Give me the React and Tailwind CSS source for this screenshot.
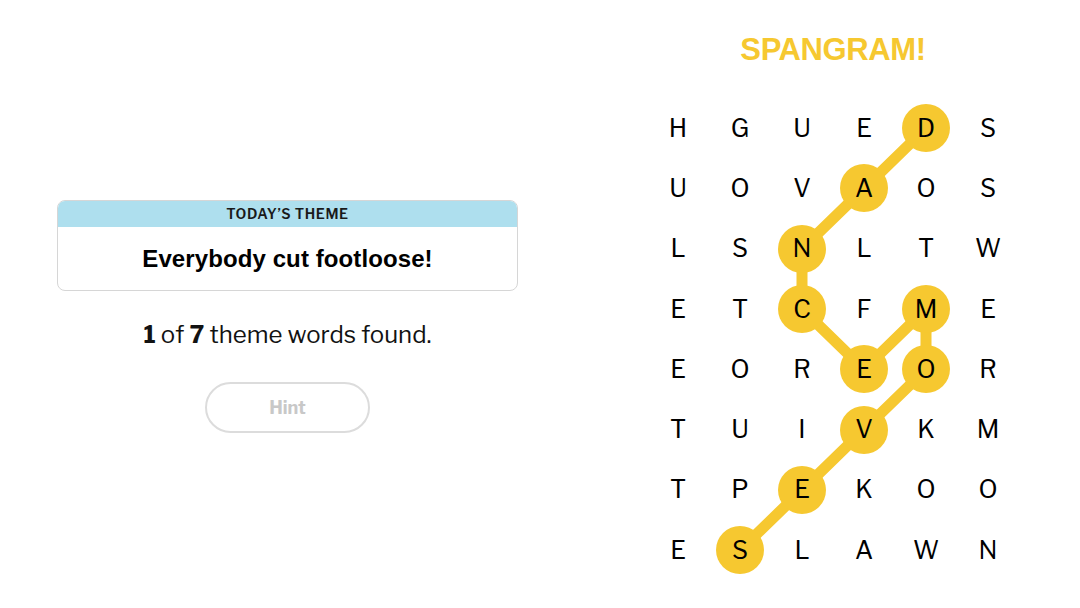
import React from 'react';

const GRID = [
  ['H', 'G', 'U', 'E', 'D', 'S'],
  ['U', 'O', 'V', 'A', 'O', 'S'],
  ['L', 'S', 'N', 'L', 'T', 'W'],
  ['E', 'T', 'C', 'F', 'M', 'E'],
  ['E', 'O', 'R', 'E', 'O', 'R'],
  ['T', 'U', 'I', 'V', 'K', 'M'],
  ['T', 'P', 'E', 'K', 'O', 'O'],
  ['E', 'S', 'L', 'A', 'W', 'N'],
];

// DANCEMOVES, row/col pairs in order
const PATH = [
  [0, 4], [1, 3], [2, 2], [3, 2], [4, 3], [3, 4], [4, 4], [5, 3], [6, 2], [7, 1],
];

const CELL_W = 62;
const CELL_H = 60.3;

const center = ([r, c]) => [c * CELL_W + CELL_W / 2, r * CELL_H + CELL_H / 2];

const isSelected = (r, c) => PATH.some(([pr, pc]) => pr === r && pc === c);

const App = () => {
  const points = PATH.map(center).map(([x, y]) => `${x},${y}`).join(' ');

  return (
    <div
      className="flex h-[608px] w-[1080px] bg-white text-black"
      style={{ fontFamily: '"Libre Franklin", Inter, "Liberation Sans", sans-serif' }}
    >
      {/* Left: theme + progress */}
      <div className="flex w-[575px] flex-col items-center pt-[200px]">
        <div className="w-[461px] overflow-hidden rounded-lg border border-[#d6d6d6]">
          <div className="bg-[#aedfee] py-[4px] text-center text-[14px] font-semibold leading-[18px] tracking-[0.6px] text-[#1a1a1a]">
            TODAY’S THEME
          </div>
          <div className="flex h-[63px] items-center justify-center text-[24px] font-bold text-black font-['Liberation_Sans',sans-serif] tracking-[0.1px]">
            Everybody cut footloose!
          </div>
        </div>

        <p className="mt-[29px] text-[24px] leading-[30px] text-[#121212]">
          <span className="font-bold">1</span> of <span className="font-bold">7</span> theme words found.
        </p>

        <button className="mt-[32px] h-[51px] w-[165px] rounded-full border-2 border-[#dcdcdc] text-[18px] font-bold text-[#c8c8c8]">
          Hint
        </button>
      </div>

      {/* Right: board */}
      <div className="ml-[72px] flex w-[372px] flex-col items-center">
        <h2 className="mt-[31px] h-[38px] text-[31px] font-bold leading-[38px] tracking-[-0.4px] text-[#f6c830] font-['Liberation_Sans',sans-serif]">
          SPANGRAM!
        </h2>

        <div className="relative mt-[29px] w-[372px]">
          <svg className="absolute left-0 top-0" width="372" height="483">
            <polyline
              points={points}
              fill="none"
              stroke="#f6c830"
              strokeWidth="11"
              strokeLinejoin="round"
              strokeLinecap="round"
            />
          </svg>
          <div className="relative grid grid-cols-6 auto-rows-[60.3px]">
            {GRID.map((row, r) =>
              row.map((ch, c) => (
                <div key={`${r}-${c}`} className="flex items-center justify-center">
                  <span
                    className={
                      'flex h-[48px] w-[48px] items-center justify-center rounded-full text-[25px] leading-none ' +
                      (isSelected(r, c) ? 'bg-[#f6c830]' : '')
                    }
                  >
                    {ch}
                  </span>
                </div>
              ))
            )}
          </div>
        </div>
      </div>
    </div>
  );
};

export default App;
